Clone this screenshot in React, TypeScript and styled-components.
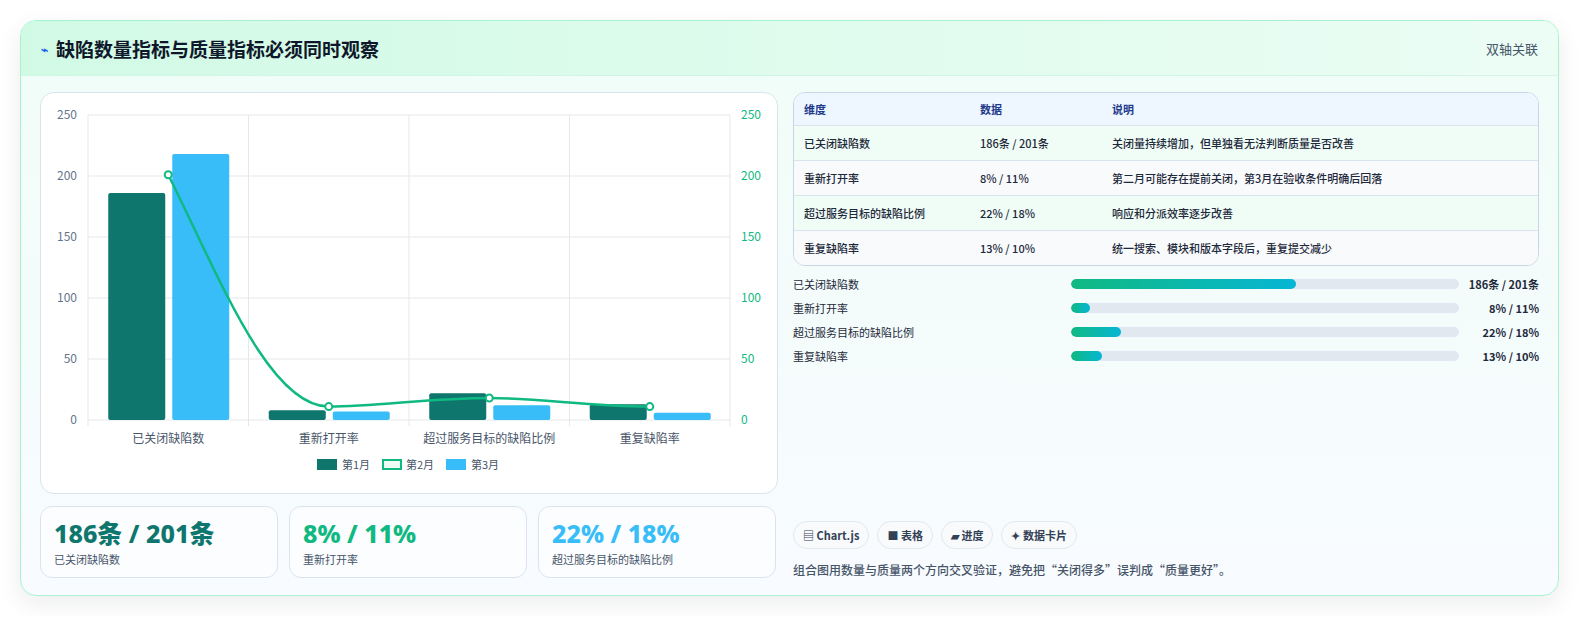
import React from 'react';
import styled, {createGlobalStyle} from 'styled-components';

const GlobalStyle = createGlobalStyle`
  body { margin: 0; background: #fff; font-family: "Noto Sans CJK SC", "Noto Sans", sans-serif; color: #1e293b; }
`;

const rows = [
  {dim: '已关闭缺陷数', data: '186条 / 201条', note: '关闭量持续增加，但单独看无法判断质量是否改善', pct: 58},
  {dim: '重新打开率', data: '8% / 11%', note: '第二月可能存在提前关闭，第3月在验收条件明确后回落', pct: 5},
  {dim: '超过服务目标的缺陷比例', data: '22% / 18%', note: '响应和分派效率逐步改善', pct: 13},
  {dim: '重复缺陷率', data: '13% / 10%', note: '统一搜索、模块和版本字段后，重复提交减少', pct: 8},
];

const m1 = [186, 8, 22, 13];
const m2 = [201, 11, 18, 11];
const m3 = [218, 7, 12, 6];
const cats = ['已关闭缺陷数', '重新打开率', '超过服务目标的缺陷比例', '重复缺陷率'];

const Page = styled.div`padding: 20px;`;
const Card = styled.div`
  border: 1px solid #a7f3d0; border-radius: 16px; overflow: hidden;
  background: linear-gradient(180deg, #f0fdf7, #f8fbff);
  box-shadow: 0 8px 24px rgba(15, 23, 42, 0.08);
`;
const Header = styled.div`
  height: 54px; display: flex; align-items: center; justify-content: space-between; padding: 0 20px;
  background: linear-gradient(90deg, #d1fae5, #ecfdf5); border-bottom: 1px solid #d1f5e6;
`;
const Title = styled.h2`
  margin: 0; font-size: 19px; font-weight: 700; color: #0f172a; display: flex; align-items: center; gap: 8px;
`;
const Tag = styled.span`font-size: 13px; color: #475569;`;
const Body = styled.div`display: grid; grid-template-columns: 738px 1fr; gap: 15px; padding: 16px 19px 17px;`;
const Left = styled.div`display: flex; flex-direction: column; gap: 12px;`;
const ChartBox = styled.div`
  height: 400px; background: #fff; border: 1px solid #dbe4ee; border-radius: 14px; position: relative;
`;
const Stats = styled.div`display: grid; grid-template-columns: repeat(3, 238px); gap: 11px;`;
const Stat = styled.div`
  height: 72px; box-sizing: border-box; padding: 10px 13px; border: 1px solid #dbe4ee; border-radius: 12px; background: #fbfdff;
`;
const StatValue = styled.div<{$c: string}>`font-size: 25px; font-weight: 800; color: ${p => p.$c}; line-height: 32px; font-family: "Noto Sans", "Noto Sans CJK SC", sans-serif;`;
const StatLabel = styled.div`font-size: 11px; color: #475569; margin-top: 2px;`;
const Right = styled.div`display: flex; flex-direction: column;`;
const Table = styled.div`border: 1px solid #c7d5e6; border-radius: 12px; overflow: hidden; background: #fff;`;
const Row = styled.div<{$head?: boolean; $alt?: boolean}>`
  display: grid; grid-template-columns: 176px 132px 1fr; padding: 0 10px; height: ${p => p.$head ? 32 : 34}px; align-items: center;
  font-size: 11px; color: ${p => p.$head ? '#1e3a8a' : '#1e293b'}; font-weight: ${p => p.$head ? 700 : 500};
  background: ${p => p.$head ? '#eef6ff' : p.$alt ? '#f8fafc' : '#f0fdf6'};
  & + & { border-top: 1px solid #dbe4ee; }
`;
const Bars = styled.div`display: flex; flex-direction: column; gap: 8px; margin-top: 10px;`;
const BarRow = styled.div`display: grid; grid-template-columns: 278px 1fr 80px; align-items: center; font-size: 11px; height: 16px;`;
const Track = styled.div`height: 10px; border-radius: 5px; background: #e2e8f0; overflow: hidden;`;
const Fill = styled.div`height: 100%; border-radius: 5px; background: linear-gradient(90deg, #10b981, #06b6d4);`;
const BarVal = styled.span`text-align: right; font-weight: 700; color: #1e293b;`;
const Spacer = styled.div`flex: 1;`;
const Chips = styled.div`display: flex; gap: 8px;`;
const Chip = styled.span`
  padding: 5px 9px; border: 1px solid #e2e8f0; border-radius: 14px; background: #f8fafc; font-size: 11px; font-weight: 700; color: #334155;
`;
const Foot = styled.p`margin: 12px 0 0; font-size: 12px; color: #475569; font-weight: 500;`;

const X0 = 47, X1 = 689, Y0 = 327, H = 305;
const yv = (v: number) => Y0 - (v / 250) * H;
const cw = (X1 - X0) / 4;

function Chart() {
  const cx = (i: number) => X0 + cw * i + cw / 2;
  const pts = m2.map((v, i) => [cx(i), yv(v)]);
  let d = `M${pts[0][0]},${pts[0][1]}`;
  for (let i = 1; i < pts.length; i++) {
    const [ax, ay] = pts[i - 1], [bx, by] = pts[i];
    d += ` C${ax + 50},${ay + (i === 1 ? 100 : 0)} ${bx - 60},${by} ${bx},${by}`;
  }
  return (
    <svg width="738" height="400" style={{fontFamily: '"Noto Sans CJK SC", sans-serif'}}>
      {[0, 50, 100, 150, 200, 250].map(v => (
        <g key={v}>
          <line x1={X0} x2={X1} y1={yv(v)} y2={yv(v)} stroke="#e5e7eb" />
          <text x={36} y={yv(v) + 4} fontSize="12" fill="#64748b" textAnchor="end">{v}</text>
          <text x={700} y={yv(v) + 4} fontSize="12" fill="#10b981">{v}</text>
        </g>
      ))}
      {[0, 1, 2, 3, 4].map(i => <line key={i} x1={X0 + cw * i} x2={X0 + cw * i} y1={yv(250)} y2={Y0 + 6} stroke="#e5e7eb" />)}
      {cats.map((c, i) => (
        <g key={c}>
          <rect x={cx(i) - 60} y={yv(m1[i])} width={57} height={Y0 - yv(m1[i])} rx={2} fill="#0f766e" />
          <rect x={cx(i) + 4} y={yv(m3[i])} width={57} height={Y0 - yv(m3[i])} rx={2} fill="#38bdf8" />
          <text x={cx(i)} y={350} fontSize="12" fill="#475569" textAnchor="middle">{c}</text>
        </g>
      ))}
      <path d={d} fill="none" stroke="#10b981" strokeWidth="2.5" />
      {pts.map(([x, y], i) => <circle key={i} cx={x} cy={y} r="3.5" fill="#fff" stroke="#10b981" strokeWidth="2" />)}
      <g fontSize="11" fill="#475569">
        <rect x={276} y={366} width={20} height={11} fill="#0f766e" />
        <text x={301} y={376}>第1月</text>
        <rect x={342} y={367} width={18} height={9} fill="#ecfdf5" stroke="#10b981" strokeWidth="2" />
        <text x={365} y={376}>第2月</text>
        <rect x={405} y={366} width={20} height={11} fill="#38bdf8" />
        <text x={430} y={376}>第3月</text>
      </g>
    </svg>
  );
}

export default function App() {
  return (
    <Page>
      <GlobalStyle />
      <Card>
        <Header>
          <Title><span style={{color: '#2563eb', fontSize: 12}}>⌁</span>缺陷数量指标与质量指标必须同时观察</Title>
          <Tag>双轴关联</Tag>
        </Header>
        <Body>
          <Left>
            <ChartBox><Chart /></ChartBox>
            <Stats>
              <Stat><StatValue $c="#0f766e">186条 / 201条</StatValue><StatLabel>已关闭缺陷数</StatLabel></Stat>
              <Stat><StatValue $c="#10b981">8% / 11%</StatValue><StatLabel>重新打开率</StatLabel></Stat>
              <Stat><StatValue $c="#38bdf8">22% / 18%</StatValue><StatLabel>超过服务目标的缺陷比例</StatLabel></Stat>
            </Stats>
          </Left>
          <Right>
            <Table>
              <Row $head><span>维度</span><span>数据</span><span>说明</span></Row>
              {rows.map((r, i) => (
                <Row key={r.dim} $alt={i % 2 === 1}><span>{r.dim}</span><span>{r.data}</span><span>{r.note}</span></Row>
              ))}
            </Table>
            <Bars>
              {rows.map(r => (
                <BarRow key={r.dim}>
                  <span>{r.dim}</span>
                  <Track><Fill style={{width: `${r.pct}%`}} /></Track>
                  <BarVal>{r.data}</BarVal>
                </BarRow>
              ))}
            </Bars>
            <Spacer />
            <Chips>
              <Chip>▤ Chart.js</Chip><Chip>■ 表格</Chip><Chip>▰ 进度</Chip><Chip>✦ 数据卡片</Chip>
            </Chips>
            <Foot>组合图用数量与质量两个方向交叉验证，避免把“关闭得多”误判成“质量更好”。</Foot>
          </Right>
        </Body>
      </Card>
    </Page>
  );
}
